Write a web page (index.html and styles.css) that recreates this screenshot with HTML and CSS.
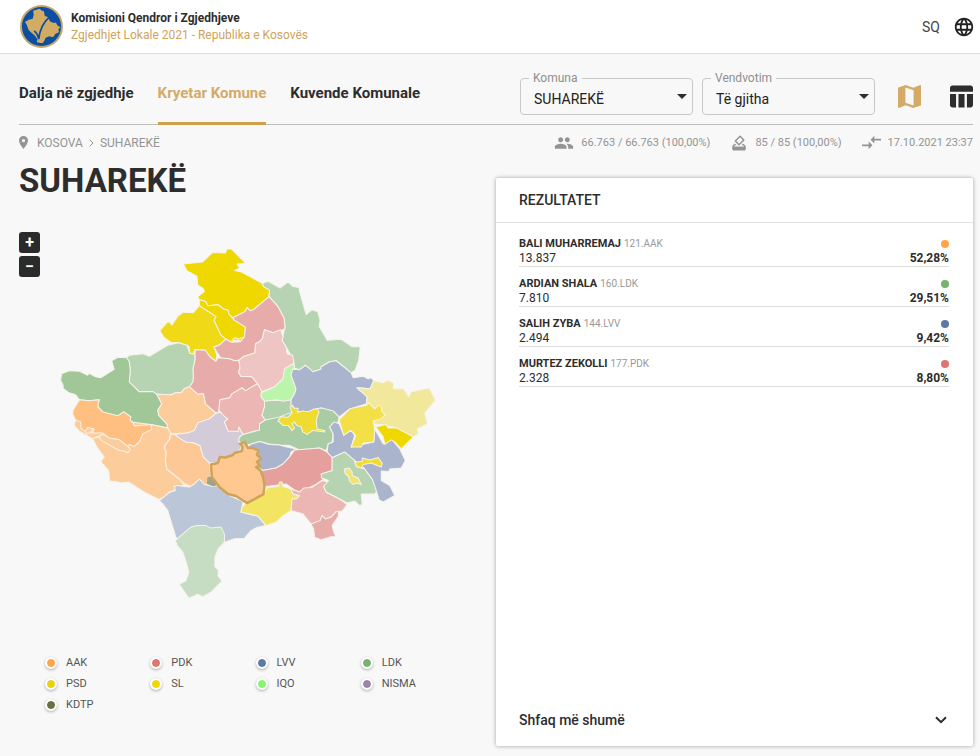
FILE: index.html
```html
<!DOCTYPE html>
<html lang="sq">
<head>
<meta charset="utf-8">
<meta name="viewport" content="width=device-width, initial-scale=1">
<title>Komisioni Qendror i Zgjedhjeve</title>
<link rel="stylesheet" href="styles.css">
</head>
<body>
<header class="topbar">
  <a class="brand" href="#">
    <svg class="brand-logo" viewBox="0 0 44 44" aria-hidden="true">
      <circle cx="22" cy="22" r="22" fill="#c4a56a"/>
      <circle cx="22" cy="22" r="20" fill="#0b4ea2"/>
      <path d="M20 3.800l2.500 2.200 2 .5.8 4.500 3.500 1.500 2 4.500 4 1.500 2-.5 1.500 3 3 1.500-2 2.500.5 3-3.500 1.500-2.500 3.500-4-1-3.500 1.500-1.500 3-1.500 2.500h-2.500l-3.500-1 .5-3-2.500-3.500-3.500-3-3-3-2-5.500-1.800-2.500 4-2.500 4-1 1-4-.5-4 2.500-1z" fill="#d3ac64"/>
      <path d="M14.500 26.500c2.500 1.500 3.800 4 4.600 8.500 1-8.500 4.200-16.500 10.400-22" fill="none" stroke="#0b4ea2" stroke-width="1.800"/>
    </svg>
    <span class="brand-text">
      <strong class="brand-name">Komisioni Qendror i Zgjedhjeve</strong>
      <span class="brand-sub">Zgjedhjet Lokale 2021 - Republika e Kosovës</span>
    </span>
  </a>
  <button class="language" type="button">SQ
    <svg class="icon-globe" viewBox="0 0 24 24" aria-hidden="true"><path d="M11.990 2C6.470 2 2 6.480 2 12s4.470 10 9.990 10C17.520 22 22 17.520 22 12S17.520 2 11.990 2zm6.930 6h-2.950c-.32-1.250-.78-2.450-1.380-3.560 1.840.63 3.370 1.910 4.330 3.560zM12 4.040c.83 1.200 1.480 2.530 1.910 3.960h-3.820c.43-1.430 1.080-2.760 1.910-3.960zM4.260 14C4.100 13.360 4 12.690 4 12s.1-1.360.26-2h3.380c-.08.66-.14 1.320-.14 2s.06 1.340.14 2H4.260zm.82 2h2.950c.32 1.250.78 2.450 1.380 3.560-1.840-.63-3.370-1.900-4.330-3.560zm2.950-8H5.080c.96-1.660 2.490-2.930 4.330-3.560C8.810 5.550 8.350 6.750 8.030 8zM12 19.960c-.83-1.200-1.480-2.530-1.910-3.960h3.820c-.43 1.430-1.080 2.760-1.910 3.960zM14.340 14H9.660c-.09-.66-.16-1.320-.16-2s.07-1.350.16-2h4.680c.09.65.16 1.320.16 2s-.07 1.340-.16 2zm.25 5.560c.6-1.110 1.060-2.310 1.380-3.560h2.950c-.96 1.650-2.490 2.930-4.330 3.560zM16.360 14c.08-.66.14-1.320.14-2s-.06-1.340-.14-2h3.380c.16.64.26 1.310.26 2s-.1 1.360-.26 2h-3.380z"/></svg>
  </button>
</header>

<main class="page">
  <div class="toolbar">
    <nav class="tabs">
      <a class="tab" href="#">Dalja në zgjedhje</a>
      <a class="tab tab-active" href="#" aria-current="page">Kryetar Komune</a>
      <a class="tab" href="#">Kuvende Komunale</a>
    </nav>
    <div class="filters">
      <fieldset class="field">
        <legend><label for="komuna">Komuna</label></legend>
        <select id="komuna"><option>SUHAREKË</option></select>
        <svg class="caret" viewBox="0 0 10 5" aria-hidden="true"><path d="M0 0h10L5 5z"/></svg>
      </fieldset>
      <fieldset class="field">
        <legend><label for="vendvotim">Vendvotim</label></legend>
        <select id="vendvotim"><option>Të gjitha</option></select>
        <svg class="caret" viewBox="0 0 10 5" aria-hidden="true"><path d="M0 0h10L5 5z"/></svg>
      </fieldset>
      <button class="view view-active" type="button" aria-label="Harta">
        <svg viewBox="3 3 18 18" aria-hidden="true"><path fill-rule="evenodd" d="M20.500 3l-.16.03L15 5.100 9 3 3.360 4.900c-.21.07-.36.25-.36.48V20.500c0 .28.22.5.5.5l.16-.03L9 18.900l6 2.100 5.640-1.900c.21-.07.36-.25.36-.48V3.500c0-.28-.22-.5-.5-.5zM8.800 5l6.400 2.200V19l-6.400-2.200z"/></svg>
      </button>
      <button class="view" type="button" aria-label="Tabela">
        <svg viewBox="3 2.500 19 19" aria-hidden="true"><path d="M10 10.020h5V21h-5zM17 21h3c1.100 0 2-.9 2-2v-9h-5v11zm3-18H5c-1.100 0-2 .9-2 2v3h19V5c0-1.100-.9-2-2-2zM3 19c0 1.100.9 2 2 2h3V10H3v9z"/></svg>
      </button>
    </div>
  </div>

  <div class="infobar">
    <nav class="crumbs">
      <svg class="icon-pin" viewBox="5 2 14 20" aria-hidden="true"><path d="M12 2C8.130 2 5 5.130 5 9c0 5.250 7 13 7 13s7-7.750 7-13c0-3.870-3.130-7-7-7zm0 9.500a2.500 2.500 0 0 1 0-5 2.500 2.500 0 0 1 0 5z"/></svg>
      <a href="#">KOSOVA</a>
      <svg class="icon-next" viewBox="0 0 5 8" aria-hidden="true"><path d="M.7.7L4 4 .7 7.300"/></svg>
      <a href="#">SUHAREKË</a>
    </nav>
    <div class="stats">
      <span class="stat">
        <svg class="icon-people" viewBox="0 0 24 24" aria-hidden="true"><path d="M16 11c1.660 0 2.990-1.340 2.990-3S17.660 5 16 5c-1.660 0-3 1.340-3 3s1.340 3 3 3zm-8 0c1.660 0 2.990-1.340 2.990-3S9.660 5 8 5C6.340 5 5 6.340 5 8s1.340 3 3 3zm0 2c-2.330 0-7 1.170-7 3.500V19h14v-2.500c0-2.330-4.670-3.500-7-3.500zm8 0c-.29 0-.62.02-.97.05 1.160.84 1.970 1.970 1.970 3.450V19h6v-2.500c0-2.330-4.670-3.500-7-3.500z"/></svg>
        66.763 / 66.763 (100,00%)
      </span>
      <span class="stat">
        <svg class="icon-vote" viewBox="0 0 24 24" aria-hidden="true"><path d="M18 13h-.68l-2 2h1.910L19 17H5l1.780-2h2.050l-2-2H6l-3 3v4c0 1.100.89 2 1.990 2H19c1.100 0 2-.89 2-2v-4l-3-3zm-1-5.050l-4.950 4.950-3.540-3.540 4.950-4.950L17 7.950zm-4.240-5.660L6.390 8.660c-.39.39-.39 1.020 0 1.410l4.950 4.950c.39.39 1.020.39 1.410 0l6.360-6.360c.39-.39.39-1.020 0-1.410L14.160 2.300c-.38-.4-1.010-.4-1.400-.01z"/><path d="M5 17h14v4H5z"/></svg>
        85 / 85 (100,00%)
      </span>
      <span class="stat">
        <svg class="icon-sync" viewBox="2 2 20 20" aria-hidden="true"><path d="M9.010 14H2v2h7.010v3L13 15l-3.990-4v3zm5.980-1v-3H22V8h-7.010V5L11 9l3.990 4z"/></svg>
        17.10.2021 23:37
      </span>
    </div>
  </div>

  <div class="content">
    <section class="map-panel">
      <h1 class="title">SUHAREKË</h1>
      <div class="map">
        <div class="zoom">
          <button type="button" aria-label="Zmadho">+</button>
          <button type="button" aria-label="Zvogëlo">−</button>
        </div>
        <svg class="map-drawing" viewBox="20 232 476 400" role="img" aria-label="Komunat e Kosovës">
          <g stroke="#f6f3ea" stroke-width="1" stroke-linejoin="round">
            <polygon fill="#efd700" points="184,264 203,262 213,252.500 226,253 227.500,249 232,249 245,262 245,263.500 237.500,264 240,268 235,270.500 242,272 263,283.500 264,286.500 270,290 269.500,296.500 254,309.500 250.500,310.500 247.500,307.500 245.500,311.500 233.500,317.500 229.500,314 228.500,310 223.500,308.500 218.500,304.500 208.500,305.500 206,301 200,299.500 198.500,296.500 205,291.500 204,288.500 198.500,285 197.500,276 187.500,270.500"/>
            <polygon fill="#efd700" points="200,299.500 206,301 208.500,305.500 218.500,304.500 223.500,308.500 228.500,310 229.500,314 235,320 246,327 245,336.500 241,341.500 235,340 232,342 226.500,339 221.500,335 214.500,320 216.500,316.500 200,305.500"/>
            <path fill="none" d="M232 340l4-2.500 3 1.500 4-2M234 342l3-2 4 .5"/>
            <polygon fill="#f0d916" points="160.500,330.500 168.500,321.500 171,322.500 172.500,325 178.500,316 184,312 194,312.500 200,305.500 216.500,316.500 214.500,320 221.500,335 226.500,339 220.500,344.500 214.500,346.500 217.500,355 216.500,361 210.500,356.500 206,350 195.500,349.500 194,354 190.500,353 189.500,346 180,342.500 171.500,342 165,337.500"/>
            <polygon fill="#b6d4b2" points="263,283.500 267.500,281.500 270,282 280.500,288 288.500,282 293.500,286.500 299.500,287.500 300,291.500 306.500,314.500 312.500,309.500 318,311.500 320.500,320 319.500,326 327.500,340 341.500,339 352.500,346.500 360.500,346.500 359,360 355.500,370 351.500,372.500 336.500,360.500 330,361.500 321.500,366.500 321,369 313.500,371.500 306,365 300,369.500 295,368 294,360 286.500,346.500 282.500,340 285.500,326.500 284.500,318 278.500,306.500 269.500,296.500 270,290 264,286.500"/>
            <polygon fill="#e7acaa" points="269.500,296.500 278.500,306.500 284.500,318 285.500,328.500 280,331 273.500,332.500 265,329.500 263,338 260,341.500 256,343.500 255.500,352.500 243.500,356.500 239.500,360 235,360.500 230,358.500 221.500,358 214.500,347 220.500,344.500 226.500,339 232,342 241,341.500 245,336.500 246,327 235,320 233.500,317.500 245.500,311.500 247.500,307.500 250.500,310.500 254,309.500"/>
            <polygon fill="#e7acaa" points="195.500,349.500 206,350 210.500,356.500 216.500,361 218.500,357.500 230,358.500 235,360.500 239.500,360 240.500,368 239,372 241.500,376 252.500,376.500 258,383.500 252.500,386.500 246,390.500 242.500,387.500 232.500,393.500 230.500,397.500 220.500,399.500 219.500,411.500 216.500,412.500 206,403.500 204,393.500 198.500,394 190,386.500 193.500,381.500 194,376.500 193.500,368.500 195.500,360"/>
            <polygon fill="#efc5c4" points="265,329.500 273.500,332.500 281,329.500 283.500,336.500 282.500,340 286.500,346.500 287.500,353.500 293,355 294.500,363.500 285,370 284,378 275,386.500 262.500,391.500 258,383.500 252.500,376.500 241.500,376 239,372 240.500,368 239.500,360 243.500,356.500 255.500,352.500 256,343.500 260,341.500 263,338"/>
            <polygon fill="#b6d4b2" points="127.500,357.500 130,355 144,353.500 150,356 168.500,345 179,342.500 187.500,345 190.500,353 194,354 195.500,350 195.500,360 193.500,368.500 194,376.500 193.500,381.500 190,386.500 185,388.500 181.500,392.500 176.500,392.500 171.500,394.500 157.500,394 154,391.500 140,391.500 130,381.500 131,370 130,361.500"/>
            <polygon fill="#a1c799" points="127.500,357.500 130,361.500 131,370 130,381.500 140,391.500 154,391.500 157.500,394 162.500,403.500 158.500,410 159.500,415 167.500,423.500 168.500,427.500 151.500,424 135,425.500 134,422.500 131,420 131.500,416.500 124.500,411.500 118.500,415.500 103.500,411.500 98.500,406 100,399.500 90,400.500 80.500,399.500 76.500,394.500 70,392.500 64,388 64,385 61.500,380 62.500,373.500 70,370.500 80.500,371 88.500,375 90,373 96.500,376.500 101.500,377.500 115,369 112.500,360.500 118.500,357"/>
            <polygon fill="#fdcc9b" points="76.500,419.500 75,425 80,430.500 93.500,438.500 98.500,447.500 105,456.500 101.500,461 109.500,470 110.500,480.500 117,481 122,482.500 129.500,481.500 140,488.500 146.500,492.500 160,499 165,496 170,491.500 176,490 175,486 185,485 180,478.500 167.500,468.500 166,460 167,453 165,446 170.500,438.500 171.500,431.500 168.500,427.500 151.500,424 120,420"/>
            <polygon fill="#fdcc9b" points="93.500,438 100,436.500 102,440 120,450 125,450.500 128.500,452.500 131,449 128.500,446 120,439 110,437.500 104,434"/>
            <polygon fill="#ffbf80" points="80.500,399.500 90,400.500 100,399.500 98.500,406 103.500,411.500 118.500,415.500 124.500,411.500 131.500,416.500 131,420 134,422.500 135,425.500 151.500,424 152.500,429 143.500,433.500 140,441.500 135,446 130,444 128.500,446 120,439 110,437.500 103.500,432.500 93.500,432.500 95,428.500 88.500,427 86,431 82,428 81.500,421.500 76.500,419.500 73.500,413.500 74,409.500"/>
            <path fill="none" d="M95 428.500L91 432 88 433.500 86 431M93.500 432.500L91 432"/>
            <polygon fill="#fdcc9b" points="157.500,394 171.500,394.500 176.500,392.500 181.500,392.500 185,388.500 190,386.500 198.500,394 204,393.500 206,403.500 216.500,413 210,418.500 198.500,422.500 195,430 188,432.500 171.500,433.500 168.500,427.500 167.500,423.500 159.500,415 158.500,410 162.500,403.500"/>
            <polygon fill="#fdc896" points="171.500,433.500 175,434 180,437.500 186.500,441.500 195,442.500 200.500,445 204,456.500 210,462.500 211.500,475 208.500,483.500 205,484 200,478.500 195,483.500 192.500,486.500 185,483 180,478.500 167.500,468.500 166,460 167,453 165,446 170.500,438.500"/>
            <polygon fill="#d3cbd7" points="216.500,413 223.500,411.500 225,416 228.500,418.500 225,421.500 228.500,430.500 238.500,431 239.500,426.500 243.500,434 240,436.500 239.500,441 242,448 233.500,455 221.500,457 218.500,462 210,462.500 204,456.500 200.500,445 195,442.500 186.500,441.500 180,437.500 175,434 188,432.500 195,430 198.500,422.500 210,418.500"/>
            <polygon fill="#bbc7d8" points="160,500 165,496 170,492 176,490 175,486 178,485 185,486 190,486.500 195,483.500 200,478.500 205,484 213.500,486 218.500,485 230,495 243.500,501 241.500,511.500 258.500,515.500 266.500,525 257,527 251.500,530 245,537.500 235,538 226.500,541 200,560 176.500,536.500 174,528 171.500,520 168.500,510 163.500,503.500"/>
            <polygon fill="#c6dcc3" points="176,540 181.500,535 191.500,526.500 198,525 206.500,525 211.500,527.500 221.500,526.500 225,533.500 225,541.500 218.500,548.500 215.500,556.500 215.500,566 219,569.500 218.500,575 222.500,580.500 211.500,591.500 203.500,596 198.500,593.500 189.500,597.500 180,583.500 186.500,580 189.500,571.500 187,562 183.500,551.500 178,545"/>
            <polygon fill="#9fa58a" stroke="none" points="208,477 214,475 219,484 214,486 207.500,483.500"/>
            <polygon fill="#ebb6b4" points="220.500,399.500 230.500,397.500 232.500,393.500 242.500,387.500 246,390.500 252.500,386.500 258,383.500 262.500,391.500 261.500,396.500 266,400.500 265,406.500 262.500,415 266,419.500 260,423.500 260,429.500 243.500,434 239.500,426.500 238.500,431 228.500,430.500 225,421.500 228.500,418.500 225,416 219.500,410"/>
            <polygon fill="#b0d1ab" points="265,400.500 291.500,399.500 292,416.500 280,419.500 266,420 262.500,415 265,406.500"/>
            <polygon fill="#aacca5" points="239.500,437.500 243.500,434 260,429.500 260,423.500 266,419.500 280,416.500 300,409 316.500,408.500 322,407.500 333.500,410.500 339.500,416.500 338.500,421.500 330,426.500 333.500,433.500 332.500,441.500 328.500,443.500 326.500,450.500 320,447.500 300,449.500 290,445 280,444.500 270,443.500 260,441 251.500,443.500 246.500,445 239.500,441"/>
            <polygon fill="#bbf5ac" points="261.500,392.500 275,386.500 283.500,378.500 285,368.500 293.500,363.500 295,366.500 291.500,375 296.500,388.500 295,393.500 291.500,399.500 284,401 276.500,399.500 265,401 262,397"/>
            <polygon fill="#aab5cd" points="300,369.500 306,365 313.500,371.500 321,369 321.500,366.500 330,361.500 336.500,360.500 351.500,372.500 353.500,377.500 363.500,376 368.500,378.500 371.500,377.500 374,380.500 370.500,388.500 358.500,387.500 367.500,396.500 366.500,403.500 350,408.500 339.500,416.500 333.500,410.500 322,407.500 316.500,408.500 308.500,411.500 297.500,411.500 291.500,405 291.500,399.500 295,393.500 296.500,388.500 291.500,375 293,369"/>
            <polygon fill="#f0dc30" points="278.500,420.500 281.500,416 288,417 292.500,413 290.500,406.500 293,405 295,408 298.500,408 298,412 303,410.500 308.500,411.500 313.500,409 318,408.500 319.500,411.500 316.500,420 317.500,428.500 325,430 325,431.500 313.500,430 307.500,434 303,431.500 301.500,426.500 297,425 295,421.500 292.500,423.500 295,427.500 292.500,430 288.500,425 283.500,425"/>
            <polygon fill="#aab5cd" points="248.500,446 252,443.500 260,441 270,444 280,444.500 285,446 296.500,448.500 291.500,451.500 290,456.500 283.500,463.500 276.500,467.500 263.500,470 257.500,466.500 255,450"/>
            <polygon fill="#e59f9c" points="260,470.500 276.500,467.500 283.500,463.500 290,456.500 295,449.500 308,448.500 320,447.500 326.500,451 332.500,456.500 332.500,470 322.500,473.500 323.500,479 316.500,484 312,486 306.500,488.500 300,491.500 295,489.500 286.500,483.500 266.500,486 262,480"/>
            <polygon fill="#f3e464" points="264,493.500 268,487 279,486 280,481.500 282.500,481.500 283.500,486 291.500,488.500 293.500,493.500 300,495 296.500,498.500 292.500,498.500 291.500,510 283.500,515 276.500,521.500 266.500,525 258.500,515.500 241.500,511.500 242.500,506.500 246.500,502.500 255,498.500"/>
            <polygon fill="#ebb6b4" points="291.500,488.500 300,491.500 304,487.500 312,487 316.500,484 322.500,480 328.500,481.500 324,486 326.500,491.500 340,498.500 347.500,504 342.500,510.500 336.500,511 331.500,516.500 326,518.500 322.500,515 320.500,520 311.500,523.500 303.500,513.500 291.500,510 292.500,498.500 296.500,498.500 300,495 293.500,493.500"/>
            <polygon fill="#e7acaa" points="311.500,523.500 320.500,520 322.500,515 326,518.500 331.500,516.500 336.500,511 339,511.500 338.500,516 332.500,525 334,531 336,536 331.500,536 321.500,539 315,536.500 314,528.500"/>
            <polygon fill="#b6d4b2" points="321.500,473.500 332.500,470 332.500,457 345,451.500 355,460 356.500,466 365,468.500 373.500,480 377.500,490 375,493.500 361.500,493.500 362.500,504 360,505 355,500.500 347.500,502.500 340,498.500 326.500,491.500 324,486 329,480 322,477.500"/>
            <polygon fill="#f1e474" points="344.500,468.500 349.500,467.500 352.500,471.500 352.500,475 358.500,477.500 361.500,484 357,482.500 353.500,484 349.500,480 349,476 345.500,473"/>
            <polygon fill="#aab5cd" points="330,426.500 334.500,421.500 339.500,423.500 344,434.500 351.500,430 355,435 351.500,446.500 374,441.500 375,428.500 383.500,443.500 391.500,438.500 400,448.500 405.500,460 401.500,467.500 390,468.500 389,471 381.500,470.500 381.500,480 390,485 395,495 383.500,501.500 379.500,499.500 376.500,490 372.500,478.500 365,468.500 355,460 345,451.500 332.500,457 327.500,451.500 328.500,443.500 333.500,441.500 333.500,433.500"/>
            <polygon fill="#f0dc30" points="355,461.500 362.500,461 362.500,457.500 370,459.500 378.500,457 382.500,463 381.500,466.500 371.500,462.500 363.500,464 361.500,467.500 357,466"/>
            <polygon fill="#f2e89c" points="374,380.500 383.500,382.500 387.500,380 394,382.500 393.500,388.500 403.500,388.500 409,396.500 411.500,391.500 429.500,387.500 435.500,400 425,412.500 427.500,423.500 417.500,428.500 418.500,433.500 413.500,436.500 396.500,427.500 381.500,424 373.500,423.500 375,420 385.500,414.500 366.500,405 367.500,396.500 357,387.500 370.500,388.500"/>
            <polygon fill="#f3e047" points="339.500,419.500 350,408.500 366.500,405 369.500,402.500 375,408.500 378.500,405 381.500,406 382,411 385.500,414.500 381,418.500 373.500,420.500 375,430 374,441.500 363.500,442.500 361.500,446.500 351.500,446.500 356,435 351,430 344,435"/>
            <polygon fill="#efd700" points="376,426.500 386,424 388.500,427.500 396.500,427.500 413.500,436.500 401.500,448.500 395,441.500 391.500,439.500 385,444 383.500,436.500"/>
          </g>
          <polygon fill="#ffc890" stroke="#cfa35a" stroke-width="2.500" stroke-linejoin="round" points="211.500,464 218.500,462.500 220.500,456.500 226,457 233.500,454.500 235,452.500 242.500,450.500 243,446 240.500,443.500 245,441.500 248.500,447.500 253,447.500 259,450 257.500,454.500 261.500,458 257.500,461.500 260.500,465.500 256.500,466.500 261,470 263.500,476.500 265,485 264,493.500 255,498.500 247.500,502.500 243.500,500 236.500,495.500 228.500,493.500 220,486.500 212.500,476.500"/>
        </svg>
      </div>
      <ul class="legend">
        <li><i class="dot ringed aak"></i>AAK</li>
        <li><i class="dot ringed pdk"></i>PDK</li>
        <li><i class="dot ringed lvv"></i>LVV</li>
        <li><i class="dot ringed ldk"></i>LDK</li>
        <li><i class="dot ringed psd"></i>PSD</li>
        <li><i class="dot ringed sl"></i>SL</li>
        <li><i class="dot ringed iqo"></i>IQO</li>
        <li><i class="dot ringed nisma"></i>NISMA</li>
        <li><i class="dot ringed kdtp"></i>KDTP</li>
      </ul>
    </section>

    <section class="card">
      <h2 class="card-title">REZULTATET</h2>
      <ul class="results">
        <li class="result">
          <div class="line"><span><b>BALI MUHARREMAJ</b> <small>121.AAK</small></span><i class="dot aak"></i></div>
          <div class="line"><span>13.837</span><b>52,28%</b></div>
        </li>
        <li class="result">
          <div class="line"><span><b>ARDIAN SHALA</b> <small>160.LDK</small></span><i class="dot ldk"></i></div>
          <div class="line"><span>7.810</span><b>29,51%</b></div>
        </li>
        <li class="result">
          <div class="line"><span><b>SALIH ZYBA</b> <small>144.LVV</small></span><i class="dot lvv"></i></div>
          <div class="line"><span>2.494</span><b>9,42%</b></div>
        </li>
        <li class="result">
          <div class="line"><span><b>MURTEZ ZEKOLLI</b> <small>177.PDK</small></span><i class="dot pdk"></i></div>
          <div class="line"><span>2.328</span><b>8,80%</b></div>
        </li>
      </ul>
      <button class="more" type="button">Shfaq më shumë
        <svg class="icon-more" viewBox="0 0 12 8" aria-hidden="true"><path d="M1 1.200l5 5 5-5"/></svg>
      </button>
    </section>
  </div>
</main>
</body>
</html>
```

FILE: styles.css
```css
* {
  box-sizing: border-box;
}

body {
  margin: 0;
  min-height: 100vh;
  display: flex;
  flex-direction: column;
  background: #f8f8f8;
  color: #2d2d2d;
  font-family: Roboto, "Liberation Sans", sans-serif;
  font-size: 12px;
}

a {
  color: inherit;
  text-decoration: none;
}

button {
  border: 0;
  padding: 0;
  background: none;
  color: inherit;
  font: inherit;
  cursor: pointer;
}

ul {
  margin: 0;
  padding: 0;
  list-style: none;
}

svg {
  display: block;
  flex: none;
  fill: currentColor;
}

/* Header */

.topbar {
  display: flex;
  align-items: center;
  justify-content: space-between;
  height: 54px;
  padding: 0 5px 0 20px;
  border-bottom: 1px solid #dedede;
  background: #fff;
}

.brand {
  display: flex;
  align-items: center;
  gap: 8px;
}

.brand-logo {
  width: 43px;
  height: 43px;
}

.brand-text {
  display: flex;
  flex-direction: column;
  line-height: 17px;
}

.brand-name {
  font-size: 12px;
  font-weight: 700;
}

.brand-sub {
  color: #cfa35a;
}

.language {
  display: flex;
  align-items: center;
  gap: 13px;
  font-size: 14px;
  color: #444;
}

.icon-globe {
  width: 22px;
  height: 22px;
  color: #222;
}

/* Tabs and filters */

.page {
  flex: 1;
  display: flex;
  flex-direction: column;
  padding: 0 7px 10px 19px;
}

.toolbar {
  display: flex;
  justify-content: space-between;
  height: 71px;
  border-bottom: 1px solid #bdbdbd;
}

.tabs {
  display: flex;
  gap: 24px;
}

.tab {
  height: 71px;
  padding-top: 28px;
  border-bottom: 3px solid transparent;
  font-size: 15px;
  line-height: 22px;
  font-weight: 700;
  white-space: nowrap;
}

.tab-active {
  border-bottom-color: #cfa04a;
  color: #d3ab66;
}

.filters {
  display: flex;
  align-items: flex-start;
  padding-top: 17px;
}

.field {
  position: relative;
  width: 173px;
  height: 44px;
  margin: 0 9px 0 0;
  padding: 0;
  border: 1px solid #c8c8c8;
  border-radius: 4px;
}

.field legend {
  margin-left: 8px;
  padding: 0 4px;
  line-height: 14px;
  color: #8f8f8f;
}

.field select {
  width: 100%;
  height: 27px;
  padding: 0 28px 0 13px;
  border: 0;
  background: none;
  appearance: none;
  color: #222;
  font-family: inherit;
  font-size: 14px;
}

.caret {
  position: absolute;
  right: 5px;
  bottom: 15px;
  width: 10px;
  height: 5px;
  pointer-events: none;
}

.view {
  margin: 14px 0 0 14px;
}

.view + .view {
  margin-left: 29px;
}

.view svg {
  width: 23px;
  height: 23px;
}

.view-active {
  color: #d3ab66;
}

/* Breadcrumbs and counters */

.infobar {
  display: flex;
  align-items: center;
  justify-content: space-between;
  height: 35px;
  color: #949494;
}

.crumbs,
.stats,
.stat {
  display: flex;
  align-items: center;
}

.crumbs {
  gap: 6px;
}

.icon-pin {
  width: 9px;
  height: 13px;
  margin-right: 3px;
}

.icon-next {
  width: 5px;
  height: 8px;
  fill: none;
  stroke: currentColor;
}

.stats {
  gap: 20px;
  font-size: 11px;
}

.stat {
  gap: 7px;
  white-space: nowrap;
}

.icon-people {
  width: 20px;
  height: 20px;
}

.icon-vote {
  width: 18px;
  height: 18px;
}

.icon-sync {
  width: 19px;
  height: 19px;
}

/* Map */

.content {
  flex: 1;
  display: grid;
  grid-template-columns: 1fr 1fr;
}

.title {
  margin: 1px 0 31px;
  font-size: 33px;
  line-height: 40px;
  font-weight: 700;
}

.map {
  position: relative;
}

.map-drawing {
  width: 100%;
  height: auto;
}

.zoom {
  position: absolute;
  top: 0;
  left: 0;
  display: grid;
  gap: 3px;
}

.zoom button {
  width: 21px;
  height: 21px;
  border-radius: 3px;
  background: #2b2b2b;
  color: #fff;
  font-size: 16px;
  line-height: 21px;
  font-weight: 700;
}

.legend {
  display: grid;
  grid-template-columns: repeat(4, 1fr);
  gap: 7px 0;
  margin: 23px 30px 0 26px;
  font-size: 11px;
  line-height: 14px;
  color: #555;
}

.legend li {
  display: flex;
  align-items: center;
  gap: 9px;
}

.dot {
  width: 8px;
  height: 8px;
  border-radius: 50%;
}

.ringed {
  width: 12px;
  height: 12px;
  border: 2px solid #fff;
  background-clip: padding-box;
  box-shadow: 0 1px 3px rgba(0, 0, 0, 0.3);
}

.aak { background-color: #ffa448; }
.pdk { background-color: #dd7670; }
.lvv { background-color: #5c78a6; }
.ldk { background-color: #78b26f; }
.psd { background-color: #e8d20c; }
.sl { background-color: #f0d800; }
.iqo { background-color: #82f76e; }
.nisma { background-color: #9b86a6; }
.kdtp { background-color: #6a7040; }

/* Results card */

.card {
  display: flex;
  flex-direction: column;
  margin-top: 18px;
  border-radius: 2px;
  background: #fff;
  box-shadow: 0 0 4px rgba(0, 0, 0, 0.35);
}

.card-title {
  margin: 0;
  padding: 0 23px;
  border-bottom: 1px solid #e0e0e0;
  font-size: 14px;
  line-height: 44px;
  font-weight: 500;
}

.results {
  flex: 1;
  padding: 4px 24px 0 23px;
}

.result {
  padding-top: 9px;
  border-bottom: 1px solid #dcdcdc;
}

.line {
  display: flex;
  align-items: center;
  justify-content: space-between;
  line-height: 15px;
}

.line span > b {
  font-size: 11px;
}

.result b {
  font-weight: 700;
}

.result small {
  font-size: 10px;
  color: #999;
}

.more {
  display: flex;
  align-items: center;
  justify-content: space-between;
  height: 53px;
  padding: 0 26px 0 23px;
  font-size: 14px;
  font-weight: 500;
}

.icon-more {
  width: 12px;
  height: 8px;
  fill: none;
  stroke: currentColor;
  stroke-width: 2;
}
```
